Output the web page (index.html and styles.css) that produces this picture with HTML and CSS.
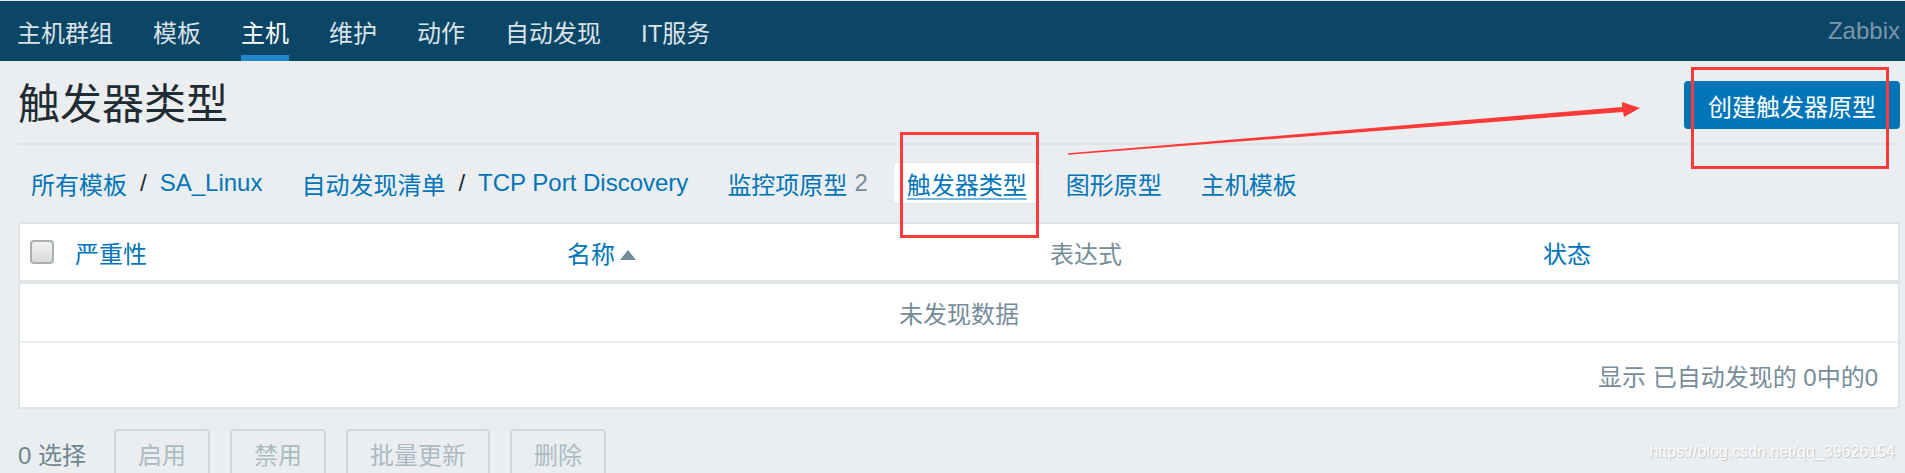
FILE: index.html
```html
<!DOCTYPE html>
<html lang="zh-CN">
<head>
  <meta charset="UTF-8">
  <title>触发器类型</title>
  <link rel="stylesheet" href="styles.css">
</head>
<body>
  <header class="topbar">
    <ul class="menu">
      <li>主机群组</li>
      <li>模板</li>
      <li class="active">主机</li>
      <li>维护</li>
      <li>动作</li>
      <li>自动发现</li>
      <li>IT服务</li>
    </ul>
    <div class="brand">Zabbix</div>
  </header>

  <main class="content">
    <div class="title-row">
      <h1>触发器类型</h1>
      <button class="btn-create">创建触发器原型</button>
    </div>

    <ul class="crumbs">
      <li><a>所有模板</a><span class="sep">/</span><a>SA_Linux</a></li>
      <li><a>自动发现清单</a><span class="sep">/</span><a>TCP Port Discovery</a></li>
      <li><a>监控项原型</a><span class="count">2</span></li>
      <li class="current"><a>触发器类型</a></li>
      <li><a>图形原型</a></li>
      <li><a>主机模板</a></li>
    </ul>

    <div class="list">
      <table>
        <thead>
          <tr>
            <th class="col-check"><span class="checkbox"></span></th>
            <th class="col-severity"><a>严重性</a></th>
            <th class="col-name"><a>名称</a><span class="arrow-up"></span></th>
            <th class="col-expr">表达式</th>
            <th class="col-status"><a>状态</a></th>
          </tr>
        </thead>
        <tbody>
          <tr>
            <td class="empty" colspan="5">未发现数据</td>
          </tr>
        </tbody>
      </table>
      <div class="paging">显示 已自动发现的 0中的0</div>
    </div>

    <div class="actions">
      <span class="selected">0 选择</span>
      <button disabled>启用</button>
      <button disabled>禁用</button>
      <button disabled>批量更新</button>
      <button disabled>删除</button>
    </div>
  </main>

  <div class="watermark">https://blog.csdn.net/qq_39626154</div>

  <!-- red annotation marks drawn over the screenshot -->
  <svg class="marks" width="1905" height="473" viewBox="0 0 1905 473">
    <rect x="901.5" y="133.5" width="136" height="103" fill="none" stroke="#fd3a3a" stroke-width="3"/>
    <rect x="1692.5" y="68.5" width="195" height="99" fill="none" stroke="#fd3a3a" stroke-width="3"/>
    <polygon fill="#fd3a3a" points="1068,153.3 1622,107 1622,102 1640,108 1624,117 1623,112 1068,154.7"/>
  </svg>
</body>
</html>
```

FILE: styles.css
```css
html, body {
  margin: 0;
  height: 100%;
  overflow: hidden;
}
body {
  position: relative;
  font-family: "Liberation Sans", "Noto Sans CJK SC", sans-serif;
  font-size: 24px;
  color: #1f2c33;
  background-color: #ebeef0;
}
ul {
  list-style: none;
  margin: 0;
  padding: 0;
}
a {
  color: #0275b8;
  cursor: pointer;
}

/* top menu */
.topbar {
  display: flex;
  align-items: center;
  height: 60px;
  border-top: 1px solid #e4eaee;
  background-color: #0b4667;
  padding: 0 5px 0 17px;
}
.menu {
  display: flex;
  gap: 40px;
  height: 60px;
}
.menu li {
  display: flex;
  align-items: center;
  box-sizing: border-box;
  height: 60px;
  padding-top: 1px;
  color: #dbe3e8;
  border-bottom: 6px solid transparent;
  border-top: 6px solid transparent;
}
.menu li.active {
  color: #fff;
  border-bottom-color: #1f87cb;
}
.brand {
  margin-left: auto;
  color: #7b97a9;
}

/* page */
.content {
  padding: 0 5px 0 18px;
}
.title-row {
  display: flex;
  justify-content: space-between;
  align-items: center;
  padding: 20px 0 14px;
  border-bottom: 2px solid #dfe4e7;
}
h1 {
  margin: 0;
  font-size: 42px;
  font-weight: normal;
  line-height: 48px;
}
.btn-create {
  height: 48px;
  padding: 0 24px;
  font-family: inherit;
  font-size: 24px;
  color: #fff;
  background-color: #0275b8;
  border: none;
  border-radius: 4px;
}

/* breadcrumbs */
.crumbs {
  display: flex;
  gap: 13px;
  margin-top: 18px;
}
.crumbs li {
  display: flex;
  align-items: center;
  height: 40px;
  padding: 0 13px;
  white-space: pre;
}
.crumbs .sep {
  margin: 0 13px;
  color: #1f2c33;
}
.crumbs .count {
  margin-left: 7px;
  color: #768d99;
}
.crumbs li.current {
  background-color: #fff;
  border-radius: 4px;
  box-shadow: 0 0 0 1px #e2e7ea;
}
.crumbs li.current a {
  text-decoration: underline;
  text-decoration-color: #7ab5db;
  text-decoration-thickness: 2px;
  text-underline-offset: 4px;
}

/* list table */
.list {
  margin-top: 19px;
  background-color: #fff;
  border: 2px solid #dfe4e7;
}
table {
  width: 100%;
  border-collapse: collapse;
  table-layout: fixed;
}
th {
  height: 56px;
  padding: 0 10px;
  text-align: left;
  font-weight: normal;
  color: #768d99;
  border-bottom: 4px solid #dfe4e7;
  white-space: nowrap;
}
.col-check { width: 25px; }
.col-severity { width: 472px; }
.col-name { width: 463px; }
.col-expr { width: 473px; }
.checkbox {
  display: block;
  box-sizing: border-box;
  width: 24px;
  height: 24px;
  border: 2px solid #a9b0b4;
  border-radius: 4px;
  background: linear-gradient(#f2f2f2, #d9d9d9);
}
.arrow-up {
  display: inline-block;
  margin-left: 5px;
  vertical-align: 3px;
  border-left: 8px solid transparent;
  border-right: 8px solid transparent;
  border-bottom: 10px solid #768d99;
}
td.empty {
  height: 57px;
  padding: 0;
  text-align: center;
  color: #768d99;
  border-bottom: 2px solid #ebeef0;
}
.paging {
  display: flex;
  align-items: center;
  justify-content: flex-end;
  height: 64px;
  padding-right: 20px;
  color: #768d99;
  white-space: pre;
}

/* mass actions */
.actions {
  display: flex;
  align-items: center;
  gap: 20px;
  margin-top: 20px;
}
.selected {
  margin-right: 8px;
  color: #6f8590;
}
.actions button {
  height: 48px;
  padding: 0 22px;
  font-family: inherit;
  font-size: 24px;
  color: #acbbc2;
  background: transparent;
  border: 2px solid #cfd8dc;
  border-radius: 4px;
}

.watermark {
  position: absolute;
  top: 443px;
  right: 10px;
  font-size: 16px;
  color: rgba(255, 255, 255, 0.9);
  text-shadow: 1px 1px 1px rgba(0, 0, 0, 0.18);
}
.marks {
  position: absolute;
  top: 0;
  left: 0;
  pointer-events: none;
}
```
